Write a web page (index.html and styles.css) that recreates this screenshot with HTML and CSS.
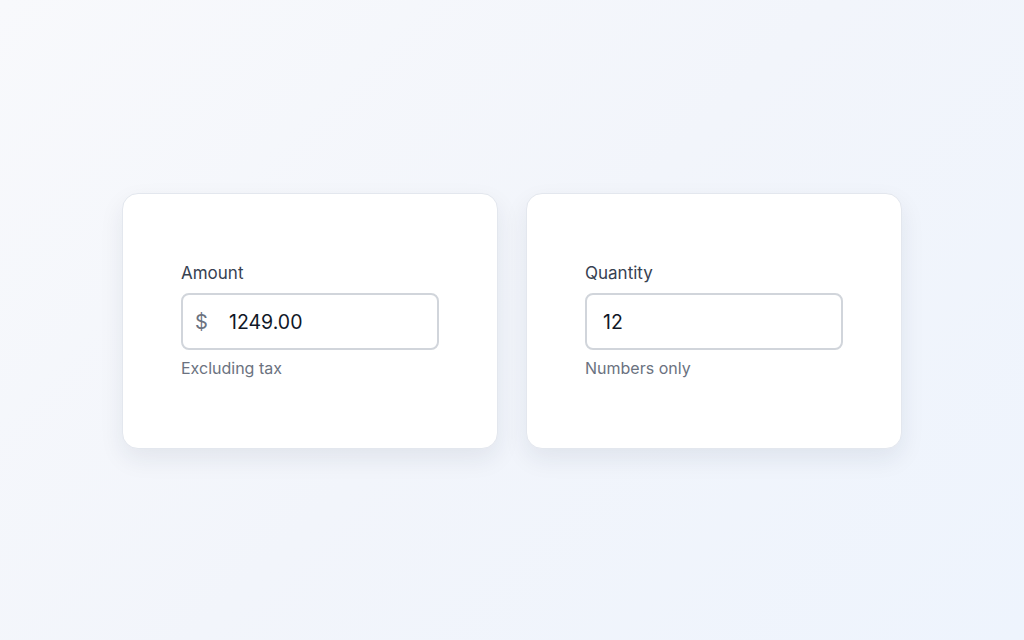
FILE: index.html
```html
<!DOCTYPE html>
<html lang="en">
<head>
  <meta charset="UTF-8" />
  <title>Fields</title>
  <link rel="stylesheet" href="styles.css">
</head>
<body>

  <main class="field-row">
    <section class="field-card">
      <div class="field">
        <label for="amount">Amount</label>
        <div class="input-box has-prefix">
          <span class="prefix">$</span>
          <input type="text" id="amount" value="1249.00" />
        </div>
        <p class="hint">Excluding tax</p>
      </div>
    </section>

    <section class="field-card">
      <div class="field">
        <label for="quantity">Quantity</label>
        <div class="input-box">
          <input type="text" id="quantity" value="12" />
        </div>
        <p class="hint">Numbers only</p>
      </div>
    </section>
  </main>

</body>
</html>
```

FILE: styles.css
```css
html, body {
  height: 100%;
}
body {
  margin: 0;
  background: linear-gradient(135deg, #f8f9fc 0%, #f2f5fb 50%, #eef4fd 100%);
  font-family: Inter, 'Noto Sans', sans-serif;
  color: #1f2937;
  display: flex;
  align-items: center;
  justify-content: center;
}

.field-row {
  display: flex;
  gap: 28px;
  margin-top: 1px;
}

.field-card {
  box-sizing: border-box;
  width: 376px;
  height: 256px;
  padding: 0 58px;
  background: #fff;
  border: 1px solid #e3e7ee;
  border-radius: 16px;
  box-shadow: 0 10px 24px rgba(30, 41, 70, 0.08);
  display: flex;
  align-items: center;
}

.field {
  width: 100%;
  margin-top: -3px;
}

.field label {
  display: block;
  font-size: 17px;
  line-height: 24px;
  color: #374151;
  margin-bottom: 8px;
}

.input-box {
  box-sizing: border-box;
  height: 57px;
  display: flex;
  align-items: center;
  padding: 2px 18px 0 14px;
  border: 2px solid #d1d5db;
  border-radius: 8px;
  background: #fff;
}
.input-box.has-prefix {
  padding-left: 12px;
}

.prefix {
  font-size: 20px;
  color: #6b7280;
  width: 32px;
}

.input-box input {
  flex: 1;
  min-width: 0;
  border: none;
  outline: none;
  padding: 0 0 0 2px;
  font-family: inherit;
  font-size: 19.5px;
  color: #111827;
  background: transparent;
}

.hint {
  margin: 8px 0 0;
  font-size: 16px;
  line-height: 20px;
  color: #6b7280;
}
```
